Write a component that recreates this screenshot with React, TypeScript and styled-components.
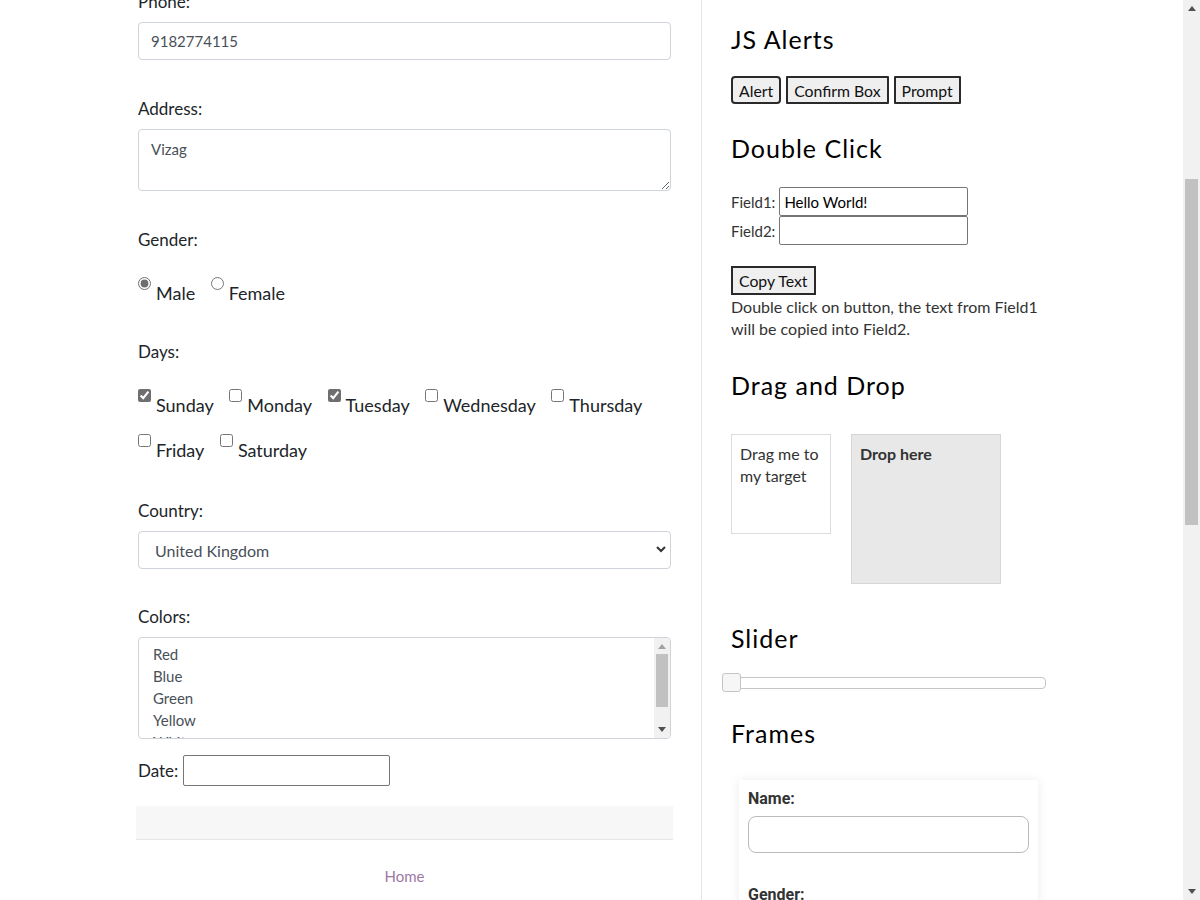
import React from "react";
import styled, { createGlobalStyle } from "styled-components";

const GlobalStyle = createGlobalStyle`
  html, body { margin: 0; padding: 0; background: #fff; overflow: hidden; }
  body { font-family: Lato, "Liberation Sans", sans-serif; color: #212529; }
  * { box-sizing: border-box; }
`;

const Page = styled.div`
  display: flex;
  width: 1200px;
  height: 900px;
  overflow: hidden;
`;

const Viewport = styled.div`
  flex: 1;
  overflow: hidden;
  height: 900px;
`;

const Content = styled.div`
  display: flex;
  padding-left: 136px;
  align-items: stretch;
`;

const LeftCol = styled.div`
  width: 537px;
  padding: 0 2px;
  margin-top: -10px;
`;

const Group = styled.div<{ $mb?: number }>`
  margin-bottom: ${(p) => p.$mb ?? 37}px;
`;

const Label = styled.div`
  font-size: 17px;
  line-height: 24px;
  color: #212529;
  margin-bottom: 8px;
`;

const TextInput = styled.input`
  display: block;
  width: 100%;
  height: 38px;
  padding: 6px 12px;
  font: 15px Lato, sans-serif;
  color: #495057;
  border: 1px solid #ced4da;
  border-radius: 4px;
  background: #fff;
`;

const TextArea = styled.textarea`
  display: block;
  width: 100%;
  height: 62px;
  padding: 8px 12px;
  font: 15px/22px Lato, sans-serif;
  color: #495057;
  border: 1px solid #ced4da;
  border-radius: 4px;
  resize: vertical;
`;

const OptionRow = styled.div<{ $mt: number }>`
  display: flex;
  flex-wrap: wrap;
  column-gap: 15.5px;
  row-gap: 15px;
  margin-top: ${(p) => p.$mt}px;
`;

const OptionItem = styled.label`
  display: flex;
  align-items: flex-start;
  gap: 5px;
  font-size: 18px;
  line-height: 28px;
  padding-top: 2px;
  color: #212529;
`;

const Check = styled.input`
  margin: -2px 0 0;
  width: 13px;
  height: 13px;
  accent-color: #6f6f6f;
`;

const SelectWrap = styled.div`
  position: relative;
`;

const Select = styled.select`
  display: block;
  width: 100%;
  height: 38px;
  padding: 6px 12px 6px 16px;
  font: 16px Lato, sans-serif;
  color: #495057;
  border: 1px solid #ced4da;
  border-radius: 4px;
  background: #fff;
  appearance: none;
`;

const Chevron = styled.svg`
  position: absolute;
  right: 5px;
  top: 15px;
  pointer-events: none;
`;

const ListBox = styled.div`
  display: flex;
  height: 102px;
  border: 1px solid #ced4da;
  border-radius: 4px;
  overflow: hidden;
`;

const ListItems = styled.div`
  flex: 1;
  padding: 5px 14px;
  font-size: 15px;
  line-height: 22px;
  color: #495057;
  overflow: hidden;
`;

const MiniBar = styled.div`
  width: 16px;
  background: #f1f1f1;
  display: flex;
  flex-direction: column;
  align-items: center;
`;

const ArrowBox = styled.div<{ $h: number }>`
  height: ${(p) => p.$h}px;
  width: 100%;
  display: flex;
  align-items: center;
  justify-content: center;
`;

const MiniThumb = styled.div`
  width: 12px;
  height: 53px;
  background: #c1c1c1;
`;

const MiniTrack = styled.div`
  flex: 1;
  width: 100%;
  display: flex;
  justify-content: center;
`;

const DateRow = styled.div`
  display: flex;
  align-items: center;
  gap: 5px;
  margin-top: 16px;
  font-size: 17px;
`;

const DateInput = styled.input`
  width: 207px;
  height: 31px;
  border: 1px solid #767676;
  border-radius: 2px;
  padding: 1px 2px;
`;

const FooterBand = styled.div`
  margin: 20px -2px 0;
  height: 34px;
  background: #f7f7f7;
  border-bottom: 1px solid #e6e6e6;
`;

const HomeLink = styled.a`
  display: block;
  text-align: center;
  margin-top: 25px;
  font-size: 15px;
  line-height: 22px;
  color: #9d78a3;
  text-decoration: none;
`;

const RightCol = styled.div`
  margin-left: 28px;
  border-left: 1px solid #e5e5e5;
  padding-left: 29px;
  width: 360px;
  min-height: 1200px;
`;

const H2 = styled.h2<{ $mt: number }>`
  margin: ${(p) => p.$mt}px 0 0;
  font-weight: 400;
  font-size: 25px;
  line-height: 31px;
  letter-spacing: 1px;
  color: #000;
`;

const BtnRow = styled.div`
  display: flex;
  gap: 5px;
  margin-top: 21px;
`;

const Btn = styled.button<{ $round?: boolean }>`
  height: 28px;
  padding: 0 6px;
  font: 15.8px Lato, sans-serif;
  color: #111;
  background: #efefef;
  border: 2px solid #2a2a2a;
  border-radius: ${(p) => (p.$round ? "4px" : "1px")};
`;

const FieldRow = styled.div<{ $mt: number }>`
  display: flex;
  align-items: center;
  gap: 4px;
  margin-top: ${(p) => p.$mt}px;
  font-size: 15px;
  color: #333;
`;

const FieldInput = styled.input`
  width: 189px;
  height: 29px;
  border: 1px solid #767676;
  border-radius: 2px;
  font: 15px Lato, sans-serif;
  color: #000;
  padding: 0 4px;
`;

const CopyBtn = styled(Btn)`
  height: 29px;
  margin-top: 21px;
  border-radius: 0;
`;

const Para = styled.p`
  margin: 1px 0 0;
  width: 312px;
  font-size: 16px;
  line-height: 22px;
  color: #333;
`;

const DnDRow = styled.div`
  display: flex;
  align-items: flex-start;
  gap: 20px;
  margin-top: 33px;
`;

const DragBox = styled.div`
  width: 100px;
  height: 100px;
  border: 1px solid #ddd;
  padding: 8px;
  font-size: 16px;
  line-height: 22px;
  color: #333;
`;

const DropBox = styled.div`
  width: 150px;
  height: 150px;
  background: #e8e8e8;
  border: 1px solid #d6d6d6;
  padding: 8px;
  font-size: 16px;
  line-height: 22px;
  font-weight: 700;
  color: #333;
`;

const SliderTrack = styled.div`
  position: relative;
  margin: 23px 0 0 -9px;
  width: 324px;
  height: 12px;
  border: 1px solid #c5c5c5;
  border-radius: 4px;
  background: #fff;
`;

const SliderHandle = styled.div`
  position: absolute;
  left: -1px;
  top: -5px;
  width: 19px;
  height: 19px;
  background: #f6f6f6;
  border: 1px solid #c5c5c5;
  border-radius: 3px;
`;

const FramePanel = styled.div`
  margin: 31px 0 0 8px;
  width: 299px;
  padding: 9px 9px 20px;
  background: #fff;
  box-shadow: 0 0 10px rgba(0, 0, 0, 0.08);
  font-family: Roboto, sans-serif;
`;

const FrameLabel = styled.div<{ $mt?: number }>`
  font-weight: 700;
  font-size: 16px;
  line-height: 19px;
  color: #333;
  margin-top: ${(p) => p.$mt ?? 0}px;
`;

const FrameInput = styled.input`
  display: block;
  width: 281px;
  height: 37px;
  margin-top: 8px;
  border: 1px solid #bbb;
  border-radius: 8px;
`;

const PageBar = styled.div`
  width: 17px;
  height: 900px;
  background: #f1f1f1;
  display: flex;
  flex-direction: column;
  align-items: center;
`;

const PageTrack = styled.div`
  flex: 1;
  width: 100%;
  display: flex;
  justify-content: center;
`;

const PageThumb = styled.div`
  width: 13px;
  height: 346px;
  margin-top: 162px;
  background: #c1c1c1;
`;

const Up = ({ c = "#505050" }: { c?: string }) => (
  <svg width="8" height="5" viewBox="0 0 8 5">
    <path d="M0 5 L4 0 L8 5 Z" fill={c} />
  </svg>
);
const Down = ({ c = "#505050" }: { c?: string }) => (
  <svg width="8" height="5" viewBox="0 0 8 5">
    <path d="M0 0 L8 0 L4 5 Z" fill={c} />
  </svg>
);

const days: [string, boolean][] = [
  ["Sunday", true],
  ["Monday", false],
  ["Tuesday", true],
  ["Wednesday", false],
  ["Thursday", false],
  ["Friday", false],
  ["Saturday", false],
];

export default function App() {
  return (
    <>
      <GlobalStyle />
      <Page>
        <Viewport>
          <Content>
            <LeftCol>
              <Group>
                <Label>Phone:</Label>
                <TextInput defaultValue="9182774115" />
              </Group>
              <Group>
                <Label>Address:</Label>
                <TextArea defaultValue="Vizag" />
              </Group>
              <Group $mb={33}>
                <Label>Gender:</Label>
                <OptionRow $mt={25}>
                  <OptionItem>
                    <Check type="radio" name="g" defaultChecked />
                    Male
                  </OptionItem>
                  <OptionItem>
                    <Check type="radio" name="g" />
                    Female
                  </OptionItem>
                </OptionRow>
              </Group>
              <Group $mb={35}>
                <Label>Days:</Label>
                <OptionRow $mt={25}>
                  {days.map(([d, c]) => (
                    <OptionItem key={d}>
                      <Check type="checkbox" defaultChecked={c} />
                      {d}
                    </OptionItem>
                  ))}
                </OptionRow>
              </Group>
              <Group $mb={36}>
                <Label>Country:</Label>
                <SelectWrap>
                  <Select defaultValue="uk">
                    <option value="us">United States</option>
                    <option value="uk">United Kingdom</option>
                  </Select>
                  <Chevron width="10" height="7" viewBox="0 0 10 7">
                    <path d="M1 1 L5 5 L9 1" fill="none" stroke="#333" strokeWidth="2" />
                  </Chevron>
                </SelectWrap>
              </Group>
              <Group $mb={0}>
                <Label>Colors:</Label>
                <ListBox>
                  <ListItems>
                    <div>Red</div>
                    <div>Blue</div>
                    <div>Green</div>
                    <div>Yellow</div>
                    <div>White</div>
                  </ListItems>
                  <MiniBar>
                    <ArrowBox $h={16}>
                      <Up c="#a3a3a3" />
                    </ArrowBox>
                    <MiniTrack>
                      <MiniThumb />
                    </MiniTrack>
                    <ArrowBox $h={17}>
                      <Down />
                    </ArrowBox>
                  </MiniBar>
                </ListBox>
              </Group>
              <DateRow>
                Date:
                <DateInput />
              </DateRow>
              <FooterBand />
              <HomeLink href="#">Home</HomeLink>
            </LeftCol>
            <RightCol>
              <H2 $mt={24}>JS Alerts</H2>
              <BtnRow>
                <Btn $round>Alert</Btn>
                <Btn>Confirm Box</Btn>
                <Btn>Prompt</Btn>
              </BtnRow>
              <H2 $mt={29}>Double Click</H2>
              <FieldRow $mt={23}>
                Field1:
                <FieldInput defaultValue="Hello World!" />
              </FieldRow>
              <FieldRow $mt={0}>
                Field2:
                <FieldInput />
              </FieldRow>
              <CopyBtn>Copy Text</CopyBtn>
              <Para>
                Double click on button, the text from Field1 will be copied into Field2.
              </Para>
              <H2 $mt={30}>Drag and Drop</H2>
              <DnDRow>
                <DragBox>Drag me to my target</DragBox>
                <DropBox>Drop here</DropBox>
              </DnDRow>
              <H2 $mt={39}>Slider</H2>
              <SliderTrack>
                <SliderHandle />
              </SliderTrack>
              <H2 $mt={29}>Frames</H2>
              <FramePanel>
                <FrameLabel>Name:</FrameLabel>
                <FrameInput />
                <FrameLabel $mt={32}>Gender:</FrameLabel>
              </FramePanel>
            </RightCol>
          </Content>
        </Viewport>
        <PageBar>
          <ArrowBox $h={17}>
            <Up />
          </ArrowBox>
          <PageTrack>
            <PageThumb />
          </PageTrack>
          <ArrowBox $h={17}>
            <Down />
          </ArrowBox>
        </PageBar>
      </Page>
    </>
  );
}
